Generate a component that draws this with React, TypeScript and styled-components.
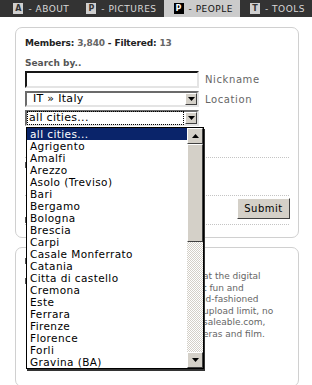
import React from 'react';
import styled, { createGlobalStyle } from 'styled-components';

/* --------------------------------- styles --------------------------------- */

const GlobalStyle = createGlobalStyle`
  html, body {
    margin: 0;
    padding: 0;
    background: #fff;
  }
  body {
    font-family: 'DejaVu Sans', Verdana, sans-serif;
    width: 312px;
    height: 385px;
    overflow: hidden;
  }
`;

const Nav = styled.div`
  display: flex;
  justify-content: flex-end;
  height: 17px;
  background: #333;
  padding-right: 0;
`;

const NavItem = styled.div<{ $active?: boolean }>`
  display: flex;
  align-items: center;
  gap: 5px;
  padding: 0 7px 0 10px;
  background: ${(p) => (p.$active ? '#cbcbcb' : 'transparent')};
  color: ${(p) => (p.$active ? '#111' : '#d8d8d8')};
  font-size: 9px;
  letter-spacing: 0.5px;
  text-transform: uppercase;
`;

const Badge = styled.span<{ $active?: boolean }>`
  display: inline-flex;
  align-items: center;
  justify-content: center;
  width: 10px;
  height: 11px;
  background: ${(p) => (p.$active ? '#000' : '#cfcfcf')};
  color: ${(p) => (p.$active ? '#fff' : '#333')};
  font-size: 8px;
  font-weight: bold;
  letter-spacing: 0;
`;

const Content = styled.div`
  padding: 10px 13px 0 15px;
  display: flex;
  flex-direction: column;
  gap: 9px;
`;

const Panel = styled.div<{ $h: number }>`
  position: relative;
  height: ${(p) => p.$h}px;
  border: 1px solid #d0d0d0;
  border-radius: 7px;
  padding: 10px 9px 0 9px;
  box-sizing: border-box;
  color: #333;
  font-size: 9px;
`;

const Stats = styled.div`
  font-weight: bold;
  color: #222;
  font-size: 9px;
  letter-spacing: -0.15px;
  span {
    color: #666;
  }
`;

const Heading = styled.div`
  margin-top: 10px;
  font-weight: bold;
  color: #555;
  font-size: 9px;
`;

const Row = styled.div`
  display: flex;
  align-items: center;
  gap: 6px;
  margin-top: 3px;
`;

const TextBox = styled.div`
  width: 174px;
  height: 17px;
  box-sizing: border-box;
  border: 2px inset #999;
  border-color: #6b6b6b #e4e4e4 #e4e4e4 #6b6b6b;
  background: #fff;
`;

const Select = styled.div`
  position: relative;
  width: 174px;
  height: 16px;
  box-sizing: border-box;
  border: 2px solid;
  border-color: #6b6b6b #e4e4e4 #e4e4e4 #6b6b6b;
  background: #fff;
  display: flex;
  align-items: center;
  font-size: 11px;
  letter-spacing: 0.3px;
  color: #000;
`;

const SelectText = styled.div<{ $focus?: boolean }>`
  flex: 1;
  margin-left: 1px;
  height: 12px;
  line-height: 12px;
  outline: ${(p) => (p.$focus ? '1px dotted #000' : 'none')};
  margin-right: 2px;
  padding-left: ${(p) => (p.$focus ? '1px' : '5px')};
`;

const ArrowBtn = styled.div`
  width: 12px;
  height: 12px;
  box-sizing: border-box;
  background: #d4d0c8;
  border: 1px solid;
  border-color: #fff #404040 #404040 #fff;
  display: flex;
  align-items: center;
  justify-content: center;
  flex-shrink: 0;
`;

const Label = styled.div`
  color: #666;
  font-size: 10px;
  letter-spacing: 0.6px;
`;

const Dotted = styled.div<{ $top: number }>`
  border-top: 1px dotted #c4c4c4;
  margin-top: ${(p) => p.$top}px;
`;

const SubmitRow = styled.div`
  display: flex;
  justify-content: flex-end;
  align-items: center;
  height: 28px;
`;

const SubmitBtn = styled.button`
  width: 53px;
  height: 21px;
  background: #d4d0c8;
  border: 1px solid;
  border-color: #fff #404040 #404040 #fff;
  font-family: 'DejaVu Sans', Verdana, sans-serif;
  font-size: 10px;
  letter-spacing: 0.5px;
  color: #000;
  padding: 0;
  margin-right: -1px;
  margin-top: -3px;
`;

const Blurb = styled.div`
  margin: 13px 0 0 178px;
  color: #666;
  font-size: 9px;
  line-height: 11.5px;
  white-space: nowrap;
`;

const Mark = styled.div<{ $top: number }>`
  position: absolute;
  left: 9px;
  top: ${(p) => p.$top}px;
  width: 1px;
  height: 6px;
  background: #555;
`;

const DropList = styled.div`
  position: absolute;
  left: 26px;
  top: 127px;
  width: 178px;
  height: 242px;
  box-sizing: border-box;
  border: 1px solid #000;
  background: #fff;
  display: flex;
  box-shadow: 1px 2px 0 #333;
`;

const Options = styled.div`
  flex: 1;
  font-size: 10.5px;
  letter-spacing: 0.4px;
  color: #000;
`;

const Option = styled.div<{ $selected?: boolean }>`
  height: 12px;
  line-height: 12px;
  padding-left: 3px;
  background: ${(p) => (p.$selected ? '#0a246a' : 'transparent')};
  color: ${(p) => (p.$selected ? '#fff' : '#000')};
`;

const Scrollbar = styled.div`
  width: 16px;
  display: flex;
  flex-direction: column;
  background-color: #e8e8e8;
  background-image: repeating-conic-gradient(#d4d0c8 0 25%, #fff 0 50%);
  background-size: 2px 2px;
`;

const ScrollBtn = styled.div`
  height: 16px;
  box-sizing: border-box;
  background: #d4d0c8;
  border: 1px solid;
  border-color: #fff #404040 #404040 #fff;
  display: flex;
  align-items: center;
  justify-content: center;
`;

const Thumb = styled.div`
  height: 98px;
  box-sizing: border-box;
  background: #d4d0c8;
  border: 1px solid;
  border-color: #fff #404040 #404040 #fff;
`;

const Track = styled.div`
  flex: 1;
`;

/* -------------------------------- component ------------------------------- */

const Arrow = ({ up }: { up?: boolean }) => (
  <svg width="7" height="4" viewBox="0 0 7 4">
    <path d={up ? 'M3.5 0 L7 4 L0 4 Z' : 'M0 0 L7 0 L3.5 4 Z'} fill="#000" />
  </svg>
);

const cities = [
  'all cities...',
  'Agrigento',
  'Amalfi',
  'Arezzo',
  'Asolo (Treviso)',
  'Bari',
  'Bergamo',
  'Bologna',
  'Brescia',
  'Carpi',
  'Casale Monferrato',
  'Catania',
  'Citta di castello',
  'Cremona',
  'Este',
  'Ferrara',
  'Firenze',
  'Florence',
  'Forli',
  'Gravina (BA)',
];

const navItems = [
  { key: 'A', label: 'About' },
  { key: 'P', label: 'Pictures' },
  { key: 'P', label: 'People', active: true },
  { key: 'T', label: 'Tools' },
];

const App = () => {
  return (
    <>
      <GlobalStyle />
      <Nav>
        {navItems.map((n) => (
          <NavItem key={n.label} $active={n.active}>
            <Badge $active={n.active}>{n.key}</Badge>- {n.label}
          </NavItem>
        ))}
      </Nav>

      <Content>
        <Panel $h={211}>
          <Stats>
            Members: <span>3,840</span> - Filtered: <span>13</span>
          </Stats>
          <Heading>Search by..</Heading>
          <Row>
            <TextBox />
            <Label>Nickname</Label>
          </Row>
          <Row>
            <Select>
              <SelectText>IT » Italy</SelectText>
              <ArrowBtn>
                <Arrow />
              </ArrowBtn>
            </Select>
            <Label>Location</Label>
          </Row>
          <Row>
            <Select>
              <SelectText $focus>all cities...</SelectText>
              <ArrowBtn>
                <Arrow />
              </ArrowBtn>
            </Select>
          </Row>
          <Dotted $top={31} />
          <Dotted $top={37} />
          <SubmitRow>
            <SubmitBtn>Submit</SubmitBtn>
          </SubmitRow>
          <Dotted $top={0} />
          <Mark $top={134} />
          <Mark $top={189} />
        </Panel>

        <Panel $h={140}>
          <Mark $top={10} />
          <Mark $top={30} />
          <Blurb>
            at the digital
            <br />t fun and
            <br />
            ld-fashioned
            <br />
            upload limit, no
            <br />
            saleable.com,
            <br />
            eras and film.
          </Blurb>
        </Panel>
      </Content>

      <DropList>
        <Options>
          {cities.map((c, i) => (
            <Option key={c} $selected={i === 0}>
              {c}
            </Option>
          ))}
        </Options>
        <Scrollbar>
          <ScrollBtn>
            <Arrow up />
          </ScrollBtn>
          <Thumb />
          <Track />
          <ScrollBtn>
            <Arrow />
          </ScrollBtn>
        </Scrollbar>
      </DropList>
    </>
  );
};

export default App;
